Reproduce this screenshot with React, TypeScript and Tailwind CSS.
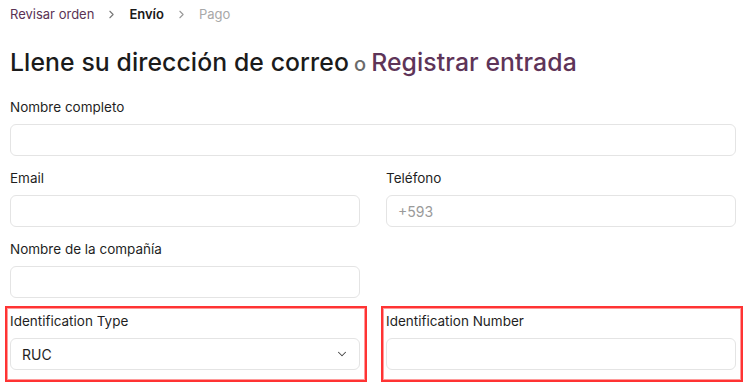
import { ChevronDown, ChevronRight } from 'lucide-react';

const font = { fontFamily: 'Inter, "Noto Sans", sans-serif' };

function Field({ label, placeholder }: { label: string; placeholder?: string }) {
  return (
    <div className="flex flex-col">
      <label className="text-[13.5px] leading-5 text-[#1f1f1f] mb-[7px]">{label}</label>
      <input
        className="h-8 w-full rounded-md border border-[#e4e4e4] bg-white px-[11px] text-[14px] text-[#222] placeholder:text-[#9a9a9a] outline-none"
        placeholder={placeholder}
      />
    </div>
  );
}

// red annotation frame drawn around a field
function Marked({ children }: { children: React.ReactNode }) {
  return (
    <div className="relative">
      {children}
      <div className="pointer-events-none absolute -top-[5px] -left-[5px] -right-[7px] -bottom-[12px] border-2 border-[#f33] shadow-[inset_0_0_0_1px_#ff9a9a]"></div>
    </div>
  );
}

export default function App() {
  return (
    <div className="min-h-screen bg-white pl-[10px] pt-[4px]" style={font}>
      <div className="w-[726px]">
        {/* breadcrumb */}
        <nav className="flex items-center gap-[11px] text-[13px] leading-5">
          <span className="text-[#5b3354]">Revisar orden</span>
          <ChevronRight size={13} strokeWidth={2} className="text-[#777]" />
          <span className="font-semibold text-[#1a1a1a]">Envío</span>
          <ChevronRight size={13} strokeWidth={2} className="text-[#999]" />
          <span className="text-[#a8a8a8]">Pago</span>
        </nav>

        <h1 className="mt-[22px] flex items-baseline text-[24.75px] leading-8 font-medium tracking-[0.1px] text-[#1b1b1b]">
          Llene su dirección de correo
          <span className="mx-[5px] text-[20px] text-[#6b6b6b]">o</span>
          <span className="text-[#5e3458]">Registrar entrada</span>
        </h1>

        <div className="mt-[17px] grid grid-cols-2 gap-x-[26px] gap-y-3">
          <div className="col-span-2">
            <Field label="Nombre completo" />
          </div>
          <Field label="Email" />
          <Field label="Teléfono" placeholder="+593" />
          <Field label="Nombre de la compañía" />
          <div></div>
          <div className="mt-px">
            <Marked>
              <div className="flex flex-col">
                <label className="text-[13.5px] leading-5 text-[#1f1f1f] mb-[7px]">Identification Type</label>
                <div className="flex h-8 items-center justify-between rounded-md border border-[#e4e4e4] bg-white pl-[11px] pr-[10px] text-[14px] text-[#1f1f1f]">
                  <span>RUC</span>
                  <ChevronDown size={14} strokeWidth={1.75} className="text-[#444]" />
                </div>
              </div>
            </Marked>
          </div>
          <div className="mt-px">
            <Marked>
              <Field label="Identification Number" />
            </Marked>
          </div>
        </div>
      </div>
    </div>
  );
}
